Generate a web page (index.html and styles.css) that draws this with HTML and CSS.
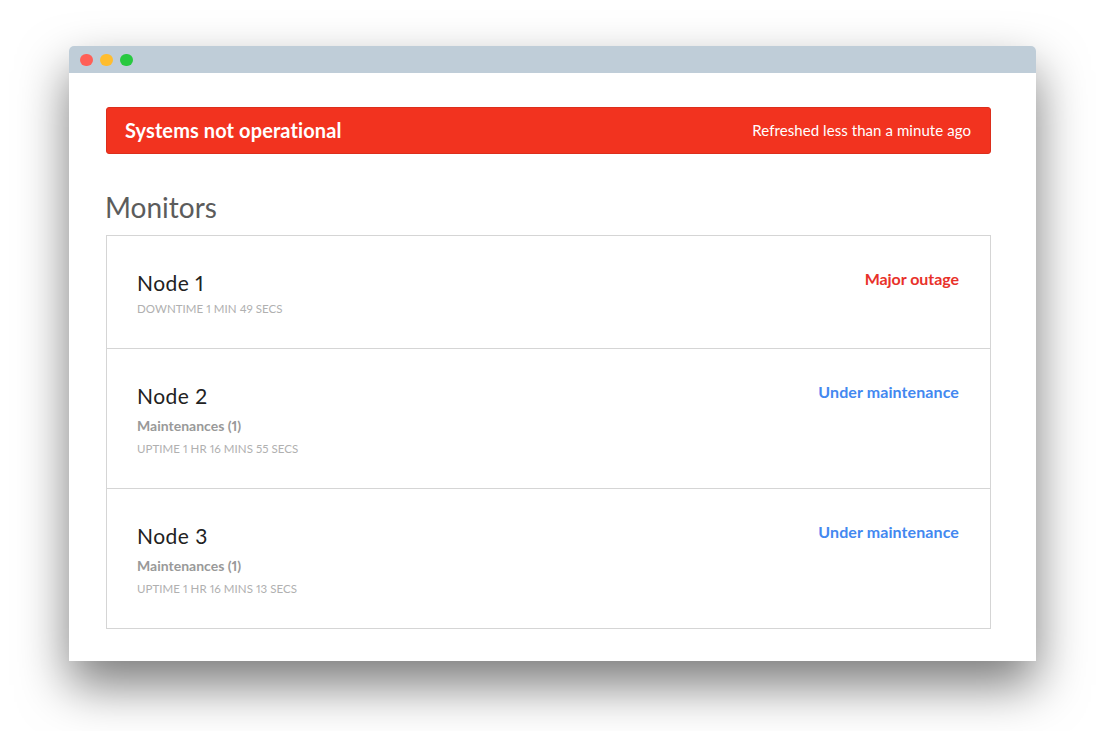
FILE: index.html
```html
<!DOCTYPE html>
<html lang="en">
<head>
<meta charset="utf-8">
<title>Monitors</title>
<link rel="stylesheet" href="styles.css">
</head>
<body>
<div class="window">
  <div class="titlebar">
    <span class="dot dot-red"></span>
    <span class="dot dot-yellow"></span>
    <span class="dot dot-green"></span>
  </div>
  <main class="content">
    <div class="banner">
      <span class="banner-title">Systems not operational</span>
      <span class="banner-note">Refreshed less than a minute ago</span>
    </div>
    <h1 class="heading">Monitors</h1>
    <div class="list">
      <section class="row">
        <div>
          <div class="name">Node 1</div>
          <div class="time">DOWNTIME 1 MIN 49 SECS</div>
        </div>
        <div class="status status-red">Major outage</div>
      </section>
      <section class="row">
        <div>
          <div class="name">Node 2</div>
          <div class="maint">Maintenances (1)</div>
          <div class="time">UPTIME 1 HR 16 MINS 55 SECS</div>
        </div>
        <div class="status status-blue">Under maintenance</div>
      </section>
      <section class="row">
        <div>
          <div class="name">Node 3</div>
          <div class="maint">Maintenances (1)</div>
          <div class="time">UPTIME 1 HR 16 MINS 13 SECS</div>
        </div>
        <div class="status status-blue">Under maintenance</div>
      </section>
    </div>
  </main>
</div>
</body>
</html>
```
FILE: styles.css
```css
html, body { margin: 0; height: 100%; }
body {
  background: #fff;
  font-family: Lato, "Open Sans", sans-serif;
  font-variant-numeric: proportional-nums;
  overflow: hidden;
  height: 731px;
  box-sizing: border-box;
  padding: 46px 0 0 69px;
}
.window {
  width: 967px;
  height: 615px;
  background: #fff;
  border-radius: 5px 5px 0 0;
  box-shadow: 0 24px 50px 0 rgba(0,0,0,.52);
}
.titlebar {
  height: 27px;
  box-sizing: border-box;
  background: #bfcdd8;
  border-radius: 5px 5px 0 0;
  display: flex;
  align-items: center;
  gap: 7px;
  padding: 1px 0 0 11px;
}
.dot { width: 12.6px; height: 12.6px; border-radius: 50%; flex: none; margin-right: .4px; }
.dot-red { background: #ff5f57; }
.dot-yellow { background: #ffbd2e; }
.dot-green { background: #28c940; }
.content { padding: 34px 45px 0 37px; }
.banner {
  height: 47px;
  box-sizing: border-box;
  background: #f2331f;
  border: 1px solid #dc2e1c;
  border-radius: 3px;
  color: #fff;
  display: flex;
  align-items: center;
  justify-content: space-between;
  padding: 0 19px 1px 18px;
}
.banner-title { font-size: 20px; font-weight: 700; letter-spacing: .1px; }
.banner-note { font-size: 15px; letter-spacing: .07px; }
.heading {
  margin: 35px 0 9px -1px;
  font-size: 28px;
  line-height: 37px;
  font-weight: 400;
  color: #5c5c5c;
}
.list { border: 1px solid #d5d5d5; }
.row {
  display: flex;
  justify-content: space-between;
  align-items: flex-start;
  padding: 34px 31px 32px 30px;
  border-bottom: 1px solid #d5d5d5;
}
.row:last-child { border-bottom: 0; }
.name { font-size: 21px; line-height: 26px; color: #222; letter-spacing: .5px; }
.maint { margin-top: 9px; font-size: 14px; line-height: 16px; font-weight: 700; color: #999; }
.time { margin-top: 6px; font-size: 11.5px; line-height: 14px; color: #b0b0b0; letter-spacing: .05px; }
.maint + .time { margin-top: 8px; }
.status { font-size: 16px; line-height: 18px; font-weight: 700; letter-spacing: .1px; }
.status-red { color: #e8312a; letter-spacing: -.05px; }
.status-blue { color: #4388f0; }
```
